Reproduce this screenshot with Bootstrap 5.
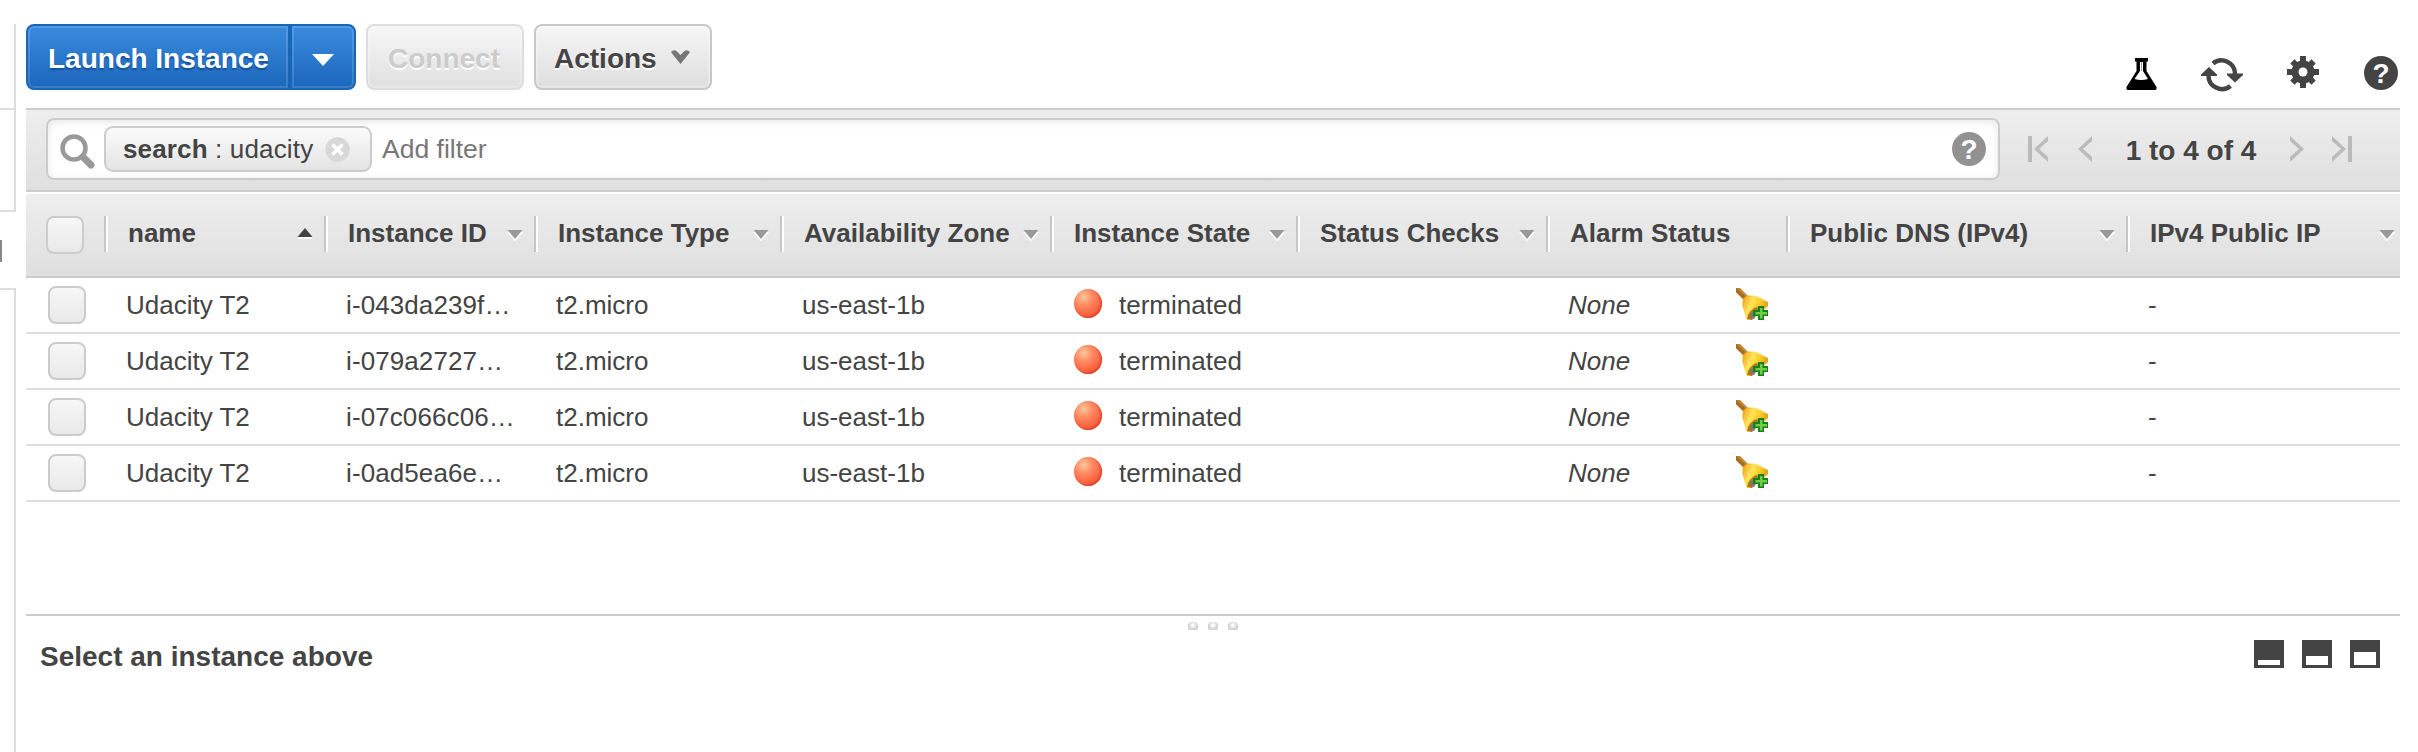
<!DOCTYPE html>
<html lang="en">
<head>
<meta charset="utf-8">
<title>EC2 Instances</title>
<link href="https://cdn.jsdelivr.net/npm/bootstrap@5.3.0/dist/css/bootstrap.min.css" rel="stylesheet">
<style>
body{font-family:"Liberation Sans",Arial,sans-serif;font-size:26px;color:#444;background:#fff;line-height:34px;height:752px;overflow:hidden}
svg{display:block;flex:none}
/* left navigation edge */
.side{width:16px;flex:none}
.side-a{height:86px;margin-top:24px;border-right:2px solid #ddd;border-bottom:2px solid #ddd}
.side-b{height:102px;border-right:2px solid #ddd;border-bottom:2px solid #ddd}
.side-gap{height:76px;padding-top:28px}
.side-gap i{display:block;width:2px;height:22px;background:#888}
.side-c{border-right:2px solid #ddd;border-top:2px solid #ddd}
.main{width:2374px;margin-left:10px;flex:none}
/* action bar */
.actions{height:108px;padding-top:24px}
.aws-btn{height:66px;border-radius:8px;font-size:28px;font-weight:700;line-height:34px;padding:3px 20px 0 18px;white-space:nowrap;border:2px solid #c8c8c8;background:linear-gradient(#f6f6f6,#dedede);color:#444;text-shadow:0 2px 0 #fff;box-shadow:inset 0 0 0 2px rgba(255,255,255,.25)}
.aws-btn.off,.aws-btn.off:disabled{border-color:#ddd;color:#ccc;background:linear-gradient(#f6f6f6,#e0e0e0);opacity:1}
.aws-btn.blue{color:#fff;border-color:#1766ba;background:linear-gradient(#3a8bdf,#1b67bb);text-shadow:0 2px 2px rgba(0,30,90,.45);box-shadow:inset 0 0 0 2px rgba(255,255,255,.14)}
.aws-btn.blue.l{width:264px;padding-left:20px;padding-right:0;border-radius:8px 0 0 8px}
.aws-btn.blue.r{width:66px;padding:0;border-radius:0 8px 8px 0}
/* filter bar */
.filter{height:84px;border-top:2px solid #ccc;border-bottom:2px solid #ccc;background:linear-gradient(#eee,#dfdfdf);padding:8px 0 0 20px;margin-bottom:2px}
.sbox{width:1954px;height:62px;border:2px solid #ccc;border-radius:8px;background:#fff;box-shadow:inset 0 2px 8px rgba(0,0,0,.1);padding:0 12px 0 11px}
.chip{width:268px;height:46px;margin-left:9px;border:2px solid #ccc;border-radius:9px;background:linear-gradient(#fbfbfb,#e4e4e4);padding:0 20px 0 17px;white-space:pre;letter-spacing:.15px}
.hint{color:#777;margin-left:10px;font-size:26.5px}
.pages{font-size:28px;font-weight:700;height:62px}
/* instance grid */
.grid{table-layout:fixed;width:2374px;border-collapse:separate;border-spacing:0}
.grid th{height:84px;padding:22px 0 0;border-bottom:2px solid #ccc;background:linear-gradient(#eee,#dfdfdf);vertical-align:top}
.grid td{height:56px;padding:0 0 0 22px;border-bottom:2px solid #ddd;white-space:nowrap;overflow:hidden}
.hd{height:36px;border-left:2px solid #c6c6c6;box-shadow:inset 2px 0 0 #fff;padding:0 11px 0 22px;line-height:34px;white-space:nowrap}
.hd svg{margin-top:14px}
.ck{display:block;width:38px;height:38px;border:2px solid #ccc;border-radius:8px;background:linear-gradient(#f7f7f7,#e9e9e9)}
.grid th .ck{margin-left:20px}
.grid td.sel{padding-left:22px}
.grid .id{letter-spacing:.1px}
.ball{width:28px;height:29px;border-radius:50%;margin:-3px 17px 0 2px;background:radial-gradient(circle at 35% 27%,#ffc59b 0,#ff8a62 32%,#fb5f3c 68%,#e43a22 100%);box-shadow:inset -1px -1px 2px #d8402c}
.alarm{padding-right:18px}
.alarm svg{margin-top:-2px}
/* details panel */
.split{height:16px;margin-top:112px;border-top:2px solid #ccc;gap:10px;padding-top:6px}
.split i{width:10px;height:8px;border-radius:4px 4px 2px 2px;background:radial-gradient(circle at 50% 40%,#fff 0 1px,#dedede 3px,#d0d0d0 5px)}
.details{height:54px;font-size:28px;font-weight:700;padding:0 20px 0 14px}
.pane{width:30px;height:28px;background:#444;padding:0 4px 3px}
.pane i{display:block;width:22px;background:#fff}
</style>
</head>
<body>
<svg width="0" height="0" class="position-absolute" aria-hidden="true">
<defs>
<linearGradient id="gold" x1="0" y1=".3" x2="1" y2=".7"><stop offset="0" stop-color="#f3a91d"/><stop offset=".3" stop-color="#ffe45b"/><stop offset=".6" stop-color="#fdca24"/><stop offset="1" stop-color="#d38a16"/></linearGradient>
<symbol id="bell" viewBox="0 0 32 32">
<path d="M0 0H4L12 8 7.500 11.500 0 4.500Z" fill="#a96e1e"/><path d="M2 0 11 8.500" stroke="#c99044" stroke-width="1.500"/>
<path d="M6.500 13Q8 7 14 7.500 21 7 25 10.500L32 14V18L16 32H11Q9 29 8 23Q5.500 18 6.500 13Z" fill="url(#gold)"/>
<path d="M11 31Q12 23 20 19L23 20 16 32Z" fill="#b5781c"/><path d="M14 30Q14 25 19 22L20 27 18 31Z" fill="#79757b"/>
<path d="M22 18H28V22H32V28H28V32H22V28H17V22H22Z" fill="#15821a"/><path d="M24 20V24H19.500V26.500H24V30.500H26.500V26.500H31V24H26.500V20Z" fill="#6fce45"/>
</symbol>
<symbol id="down" viewBox="0 0 16 12"><path d="M0 2H16L8 11.500Z" fill="#fff"/><path d="M.5 0H15.500L8 9Z" fill="#999"/></symbol>
<symbol id="help" viewBox="0 0 34 34"><circle cx="17" cy="17" r="17" fill="currentColor"/><text x="17" y="27" text-anchor="middle" font-family="Liberation Sans" font-weight="700" font-size="28" fill="#fff">?</text></symbol>
</defs>
</svg>
<div class="d-flex h-100">
<aside class="side d-flex flex-column"><div class="side-a"></div><div class="side-b"></div><div class="side-gap"><i></i></div><div class="side-c flex-grow-1"></div></aside>
<main class="main">
<div class="actions d-flex">
  <button class="btn aws-btn blue l text-start">Launch Instance</button>
  <button class="btn aws-btn blue r d-flex align-items-center justify-content-center" aria-label="More"><svg width="22" height="12" style="margin-top:6px"><path d="M0 0H22L11 12Z" fill="#fff"/></svg></button>
  <button class="btn aws-btn off" disabled style="width:158px;margin-left:10px">Connect</button>
  <button class="btn aws-btn d-flex align-items-center justify-content-between" style="width:178px;margin-left:10px">Actions<svg width="19" height="14" viewBox="0 0 19 14" style="margin-top:-4px"><path d="M0 2Q3-1 6 1.500L9.500 5 13 1.500Q16-1 19 2L16 6 9.500 14 3 6Z" fill="#777"/></svg></button>
  <div class="ms-auto d-flex">
    <svg width="31" height="34" viewBox="0 0 31 34" style="margin-top:33px"><path d="M9 1H22V4.500H20.500V14L30.500 30Q31 33 29 33H2Q0 33 .5 30L10.500 14V4.500H9Z" fill="#000"/><path d="M14 5H17V14L22 22Q15 24 8.500 22L14 14Z" fill="#fff"/><path d="M15.500 5V14" stroke="#999"/></svg>
    <svg width="42" height="34" viewBox="0 0 42 34" style="margin:34px 0 0 44px" fill="none" stroke="#444" stroke-width="4.500"><path d="M12 5.500A13.500 13.500 0 0 1 34 16"/><path d="M29.500 28A13.500 13.500 0 0 1 7.500 17"/><path d="M26 15.500H42V17L34 24.500 26 17Z" fill="#444" stroke="none"/><path d="M16 18H0V16.500L8 9 16 16.500Z" fill="#444" stroke="none"/></svg>
    <svg width="32" height="32" viewBox="-16 -16 32 32" style="margin:32px 0 0 44px"><g fill="#444"><circle r="11.500"/><path d="M-3-16H3V16H-3ZM-16-3H16V3H-16Z"/><path d="M-3-15H3V15H-3ZM-15-3H15V3H-15Z" transform="rotate(45)"/></g><circle r="4.500" fill="#fff"/></svg>
    <svg width="34" height="34" style="margin:32px 2px 0 45px;color:#444"><use href="#help"/></svg>
  </div>
</div>
<div class="filter d-flex">
  <div class="sbox d-flex align-items-center">
    <svg width="36" height="36" viewBox="0 0 36 36" style="margin-top:3px"><circle cx="15" cy="15" r="11.500" fill="none" stroke="#999" stroke-width="4.500"/><path d="M24 24 32 32" stroke="#999" stroke-width="7" stroke-linecap="round"/></svg>
    <div class="chip d-flex align-items-center"><b>search</b> : udacity<svg class="ms-auto" width="25" height="25" viewBox="0 0 25 25"><circle cx="12.500" cy="12.500" r="12.200" fill="#d8d8d8"/><path d="M7.500 7.500 17.500 17.500M17.500 7.500 7.500 17.500" stroke="#fff" stroke-width="3.500"/></svg></div>
    <span class="hint">Add filter</span>
    <svg class="ms-auto" width="34" height="34" style="color:#929292"><use href="#help"/></svg>
  </div>
  <div class="pages d-flex align-items-center">
    <svg width="20" height="26" viewBox="0 0 20 26" style="margin-left:28px"><path d="M0 0H4V26H0Z" fill="#bbb"/><path d="M20 0V5L11 13 20 21V26L6 13Z" fill="#bbb"/></svg>
    <svg width="14" height="26" viewBox="0 0 14 26" style="margin-left:30px"><path d="M14 0V5L5 13 14 21V26L0 13Z" fill="#bbb"/></svg>
    <span class="text-center pt-1" style="width:198px">1 to 4 of 4</span>
    <svg width="14" height="26" viewBox="0 0 14 26"><path d="M0 0V5L9 13 0 21V26L14 13Z" fill="#bbb"/></svg>
    <svg width="20" height="26" viewBox="0 0 20 26" style="margin-left:28px"><path d="M16 0H20V26H16Z" fill="#bbb"/><path d="M0 0V5L9 13 0 21V26L14 13Z" fill="#bbb"/></svg>
  </div>
</div>
<table class="grid">
<colgroup><col style="width:78px"><col style="width:220px"><col style="width:210px"><col style="width:246px"><col style="width:270px"><col style="width:246px"><col style="width:250px"><col style="width:240px"><col style="width:340px"><col style="width:274px"></colgroup>
<thead><tr>
<th><span class="ck"></span></th>
<th><div class="hd d-flex justify-content-between">name<svg width="16" height="12" viewBox="0 0 16 12" style="margin-top:12px"><path d="M1 9H15V11H1Z" fill="#fff"/><path d="M.5 9H15.500L8 0Z" fill="#444"/></svg></div></th>
<th><div class="hd d-flex justify-content-between">Instance ID<svg width="16" height="12"><use href="#down"/></svg></div></th>
<th><div class="hd d-flex justify-content-between">Instance Type<svg width="16" height="12"><use href="#down"/></svg></div></th>
<th><div class="hd d-flex justify-content-between">Availability Zone<svg width="16" height="12"><use href="#down"/></svg></div></th>
<th><div class="hd d-flex justify-content-between">Instance State<svg width="16" height="12"><use href="#down"/></svg></div></th>
<th><div class="hd d-flex justify-content-between">Status Checks<svg width="16" height="12"><use href="#down"/></svg></div></th>
<th><div class="hd">Alarm Status</div></th>
<th><div class="hd d-flex justify-content-between">Public DNS (IPv4)<svg width="16" height="12"><use href="#down"/></svg></div></th>
<th><div class="hd d-flex justify-content-between" style="padding-right:5px">IPv4 Public IP<svg width="16" height="12"><use href="#down"/></svg></div></th>
</tr></thead>
<tbody>
<tr><td class="sel"><span class="ck"></span></td><td>Udacity T2</td><td class="id">i-043da239f…</td><td>t2.micro</td><td>us-east-1b</td><td><div class="d-flex align-items-center"><span class="ball"></span>terminated</div></td><td></td><td><div class="alarm d-flex align-items-center justify-content-between"><i>None</i><svg width="32" height="32"><use href="#bell"/></svg></div></td><td></td><td>-</td></tr>
<tr><td class="sel"><span class="ck"></span></td><td>Udacity T2</td><td class="id">i-079a2727…</td><td>t2.micro</td><td>us-east-1b</td><td><div class="d-flex align-items-center"><span class="ball"></span>terminated</div></td><td></td><td><div class="alarm d-flex align-items-center justify-content-between"><i>None</i><svg width="32" height="32"><use href="#bell"/></svg></div></td><td></td><td>-</td></tr>
<tr><td class="sel"><span class="ck"></span></td><td>Udacity T2</td><td class="id">i-07c066c06…</td><td>t2.micro</td><td>us-east-1b</td><td><div class="d-flex align-items-center"><span class="ball"></span>terminated</div></td><td></td><td><div class="alarm d-flex align-items-center justify-content-between"><i>None</i><svg width="32" height="32"><use href="#bell"/></svg></div></td><td></td><td>-</td></tr>
<tr><td class="sel"><span class="ck"></span></td><td>Udacity T2</td><td class="id">i-0ad5ea6e…</td><td>t2.micro</td><td>us-east-1b</td><td><div class="d-flex align-items-center"><span class="ball"></span>terminated</div></td><td></td><td><div class="alarm d-flex align-items-center justify-content-between"><i>None</i><svg width="32" height="32"><use href="#bell"/></svg></div></td><td></td><td>-</td></tr>
</tbody>
</table>
<div class="split d-flex justify-content-center"><i></i><i></i><i></i></div>
<div class="details d-flex align-items-center">Select an instance above
  <div class="ms-auto d-flex" style="gap:18px;margin-top:-6px">
    <div class="pane d-flex align-items-end"><i style="height:5px"></i></div>
    <div class="pane d-flex align-items-end"><i style="height:9px"></i></div>
    <div class="pane d-flex align-items-end"><i style="height:13px"></i></div>
  </div>
</div>
</main>
</div>
<script src="https://cdn.jsdelivr.net/npm/bootstrap@5.3.0/dist/js/bootstrap.bundle.min.js"></script>
</body>
</html>
